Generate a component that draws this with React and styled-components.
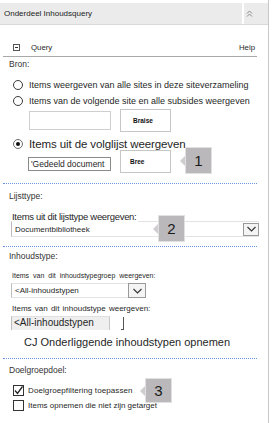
import React from "react";
import styled, { createGlobalStyle } from "styled-components";

const Global = createGlobalStyle`
  *, *::before, *::after { box-sizing: border-box; }
  html, body { margin: 0; padding: 0; background: #fff; }
  body { font-family: "Liberation Sans", Arial, sans-serif; color: #1f1f1f; }
`;

const Panel = styled.div`
  width: 269px;
  height: 423px;
  border-right: 1px solid #c9c9c9;
  padding-top: 3px;
  overflow: hidden;
`;

const Header = styled.div`
  display: flex;
  height: 22px;
  background: #ebebeb;
  border-bottom: 1px solid #d9d9d9;
`;

const HeaderTitle = styled.div`
  width: 242px;
  padding-left: 4px;
  font-size: 8px;
  line-height: 21px;
  color: #222;
`;

const HeaderDivider = styled.div`
  width: 2px;
  background: #fff;
`;

const CollapseButton = styled.div`
  flex: 1;
  display: flex;
  align-items: flex-start;
  padding: 7px 0 0 2px;
`;

const Body = styled.div`
  display: flex;
  flex-direction: column;
  padding: 0 11px 0 3px;
`;

const QueryRow = styled.div`
  display: flex;
  align-items: center;
  height: 32px;
  padding: 13px 2px 0 10px;
  border-bottom: 1px solid #a9a9a9;
  font-size: 7.8px;
`;

const MinusBox = styled.div`
  width: 7px;
  height: 7px;
  border: 1px solid #555;
  display: flex;
  align-items: center;
  justify-content: center;
  &::after {
    content: "";
    width: 3px;
    height: 1px;
    background: #333;
  }
`;

const QueryText = styled.span`
  margin-left: 11px;
`;

const HelpLink = styled.span`
  margin-left: auto;
`;

const SectionLabel = styled.div`
  height: 14px;
  line-height: 14px;
  margin-top: ${(p) => p.$mt || 0}px;
  padding-left: 6px;
  font-size: 8.5px;
  color: #333;
`;

const OptionRow = styled.label`
  display: flex;
  align-items: center;
  gap: 6px;
  height: ${(p) => p.$h || 14}px;
  margin-top: ${(p) => p.$mt || 0}px;
  padding-left: 10px;
  font-size: ${(p) => p.$fs || 9}px;
  letter-spacing: ${(p) => p.$ls || 0}px;
  white-space: nowrap;
`;

const Radio = styled.span`
  width: 10px;
  height: 10px;
  flex: none;
  border-radius: 50%;
  border: 1px solid ${(p) => (p.$checked ? "#6b6b6b" : "#3a3a3a")};
  display: flex;
  align-items: center;
  justify-content: center;
  &::after {
    content: "";
    width: 4px;
    height: 4px;
    border-radius: 50%;
    background: ${(p) => (p.$checked ? "#111" : "transparent")};
  }
`;

const InputRow = styled.div`
  display: flex;
  align-items: ${(p) => (p.$top ? "flex-start" : "center")};
  height: 23px;
  margin-top: ${(p) => p.$mt || 0}px;
  padding-left: ${(p) => p.$pl || 26}px;
`;

const TextBox = styled.div`
  width: ${(p) => p.$w}px;
  height: ${(p) => p.$h}px;
  margin-top: ${(p) => p.$mt || 0}px;
  border: 1px solid ${(p) => p.$border || "#cfcfcf"};
  font-size: 8.5px;
  line-height: ${(p) => p.$h - 2}px;
  padding-left: 2px;
  white-space: nowrap;
  overflow: hidden;
  background: #fff;
`;

const BrowseButton = styled.div`
  width: 51px;
  height: 23px;
  margin-left: ${(p) => p.$ml || 9}px;
  border: 1px solid #c6c6c6;
  background: #fff;
  font-size: 6.5px;
  font-weight: bold;
  display: flex;
  align-items: center;
  padding-left: ${(p) => p.$pl || 12}px;
  color: #111;
`;

const Callout = styled.div`
  position: ${(p) => (p.$float ? "absolute" : "relative")};
  left: ${(p) => (p.$float ? `${p.$x}px` : "auto")};
  top: ${(p) => (p.$float ? `${p.$y}px` : "auto")};
  width: ${(p) => p.$w || 27}px;
  height: ${(p) => p.$h || 27}px;
  margin-left: ${(p) => p.$ml || 0}px;
  margin-top: ${(p) => p.$mt || 0}px;
  background: #bab8ba;
  border: 1px solid #e2e1e2;
  display: flex;
  align-items: center;
  justify-content: center;
  font-size: 15px;
  color: #1a1a1a;
  z-index: 2;
  &::before {
    content: "";
    position: absolute;
    left: -6px;
    top: 50%;
    margin-top: -5px;
    border-right: 5px solid #cfcdcf;
    border-top: 5px solid transparent;
    border-bottom: 5px solid transparent;
  }
`;

const Separator = styled.div`
  height: 0;
  margin-top: ${(p) => p.$mt || 0}px;
  border-top: 1px dotted #6b93dc;
`;

const FieldLabel = styled.div`
  position: relative;
  z-index: 1;
  align-self: flex-start;
  height: 12px;
  line-height: 12px;
  margin-top: ${(p) => p.$mt || 0}px;
  margin-left: 9px;
  padding-right: 2px;
  background: #fff;
  font-size: ${(p) => p.$fs || 8}px;
  letter-spacing: ${(p) => p.$ls || 0}px;
  word-spacing: ${(p) => p.$ws || 0}px;
  white-space: nowrap;
`;

const Dropdown = styled.div`
  position: relative;
  display: flex;
  align-items: center;
  width: ${(p) => p.$w}px;
  height: ${(p) => p.$h}px;
  margin-top: ${(p) => p.$mt || 0}px;
  margin-left: 8px;
  border-top: 1px solid #e3e3e3;
  border-bottom: 1px solid #e3e3e3;
  border-left: 1px solid #bdbdbd;
  font-size: 8px;
  padding-left: 3px;
`;

const DropText = styled.span`
  flex: 1;
  white-space: nowrap;
`;

const ArrowBox = styled.div`
  width: ${(p) => p.$w}px;
  height: ${(p) => p.$h}px;
  border: 1px solid #9a9a9a;
  background: #f4f4f4;
  display: flex;
  align-items: center;
  justify-content: center;
`;

const Listbox = styled.div`
  display: flex;
  align-items: stretch;
  height: 14px;
  margin-top: 1px;
  margin-left: 8px;
  width: 113px;
`;

const ListItem = styled.div`
  width: 99px;
  background: #efefef;
  border-left: 1px solid #bdbdbd;
  border-top: 1px solid #e0e0e0;
  border-right: 1px solid #c8c8c8;
  font-size: 10px;
  line-height: 12px;
  padding-left: 2px;
  white-space: nowrap;
`;

const ListBracket = styled.div`
  margin-left: auto;
  margin-top: 1px;
  width: 3px;
  border-right: 1px solid #555;
  border-bottom: 1px solid #555;
`;

const IncludeRow = styled.div`
  height: 15px;
  line-height: 15px;
  margin-top: 5px;
  padding-left: 21px;
  font-size: 11px;
  white-space: nowrap;
`;

const CheckRow = styled.label`
  position: relative;
  display: flex;
  align-items: center;
  gap: 4px;
  height: 14px;
  margin-top: ${(p) => p.$mt || 0}px;
  padding-left: 10px;
  font-size: 8px;
  letter-spacing: ${(p) => p.$ls || 0}px;
  white-space: nowrap;
`;

const CheckBox = styled.span`
  width: 11px;
  height: 11px;
  flex: none;
  border: 1px solid #333;
  display: flex;
  align-items: center;
  justify-content: center;
`;

const ChevronUp = () => (
  <svg width="7" height="7" viewBox="0 0 7 7">
    <path d="M1 3.5 L3.5 1 L6 3.5 M1 6.5 L3.5 4 L6 6.5" fill="none" stroke="#8a8a8a" strokeWidth="1" />
  </svg>
);

const ChevronDown = () => (
  <svg width="9" height="6" viewBox="0 0 9 6">
    <path d="M0.5 1 L4.5 5 L8.5 1" fill="none" stroke="#333" strokeWidth="1.1" />
  </svg>
);

const Check = () => (
  <svg width="9" height="9" viewBox="0 0 9 9">
    <path d="M1 4.5 L3.5 7.5 L8.5 0.5" fill="none" stroke="#222" strokeWidth="1.3" />
  </svg>
);

export default function App() {
  return (
    <>
      <Global />
      <Panel>
        <Header>
          <HeaderTitle>Onderdeel Inhoudsquery</HeaderTitle>
          <HeaderDivider />
          <CollapseButton>
            <ChevronUp />
          </CollapseButton>
        </Header>
        <Body>
          <QueryRow>
            <MinusBox />
            <QueryText>Query</QueryText>
            <HelpLink>Help</HelpLink>
          </QueryRow>

          <SectionLabel>Bron:</SectionLabel>
          <OptionRow $mt={7}>
            <Radio />
            Items weergeven van alle sites in deze siteverzameling
          </OptionRow>
          <OptionRow $mt={2}>
            <Radio />
            Items van de volgende site en alle subsides weergeven
          </OptionRow>
          <InputRow $mt={1}>
            <TextBox $w={82} $h={19} />
            <BrowseButton $pl={12}>Braise</BrowseButton>
          </InputRow>
          <OptionRow $mt={4} $h={16} $fs={11.5} $ls={-0.1}>
            <Radio $checked />
            Items uit de volglijst weergeven
          </OptionRow>
          <InputRow $mt={-2} $pl={25} $top>
            <TextBox $w={83} $h={14} $mt={7} $border="#8a8a8a">
              'Gedeeld document
            </TextBox>
            <BrowseButton $pl={9}>Bree</BrowseButton>
            <Callout $ml={14} $mt={-3}>1</Callout>
          </InputRow>

          <Separator $mt={10} />
          <SectionLabel $mt={5}>Lijsttype:</SectionLabel>
          <FieldLabel $mt={8} $fs={9.5} $ls={-0.3}>
            Items uit dit lijsttype weergeven:
          </FieldLabel>
          <Dropdown $w={248} $h={16} $mt={-2}>
            <DropText>Documentbibliotheek</DropText>
            <ArrowBox $w={16} $h={13}>
              <ChevronDown />
            </ArrowBox>
            <Callout $float $x={146} $y={-7}>2</Callout>
          </Dropdown>

          <Separator $mt={9} />
          <SectionLabel $mt={2}>Inhoudstype:</SectionLabel>
          <FieldLabel $mt={7} $fs={7} $ws={2}>
            Items van dit inhoudstypegroep weergeven:
          </FieldLabel>
          <Dropdown $w={135} $h={15} $mt={1}>
            <DropText>&lt;All-inhoudstypen</DropText>
            <ArrowBox $w={18} $h={15}>
              <ChevronDown />
            </ArrowBox>
          </Dropdown>
          <FieldLabel $mt={5} $fs={8} $ws={1}>
            Items van dit inhoudstype weergeven:
          </FieldLabel>
          <Listbox>
            <ListItem>&lt;All-inhoudstypen</ListItem>
            <ListBracket />
          </Listbox>
          <IncludeRow>CJ Onderliggende inhoudstypen opnemen</IncludeRow>

          <Separator $mt={8} />
          <SectionLabel $mt={4}>Doelgroepdoel:</SectionLabel>
          <CheckRow $mt={6} $ls={0.1}>
            <CheckBox>
              <Check />
            </CheckBox>
            Doelgroepfiltering toepassen
            <Callout $float $x={142} $y={-5} $h={25}>3</Callout>
          </CheckRow>
          <CheckRow $mt={1}>
            <CheckBox />
            Items opnemen die niet zijn getarget
          </CheckRow>
        </Body>
      </Panel>
    </>
  );
}
